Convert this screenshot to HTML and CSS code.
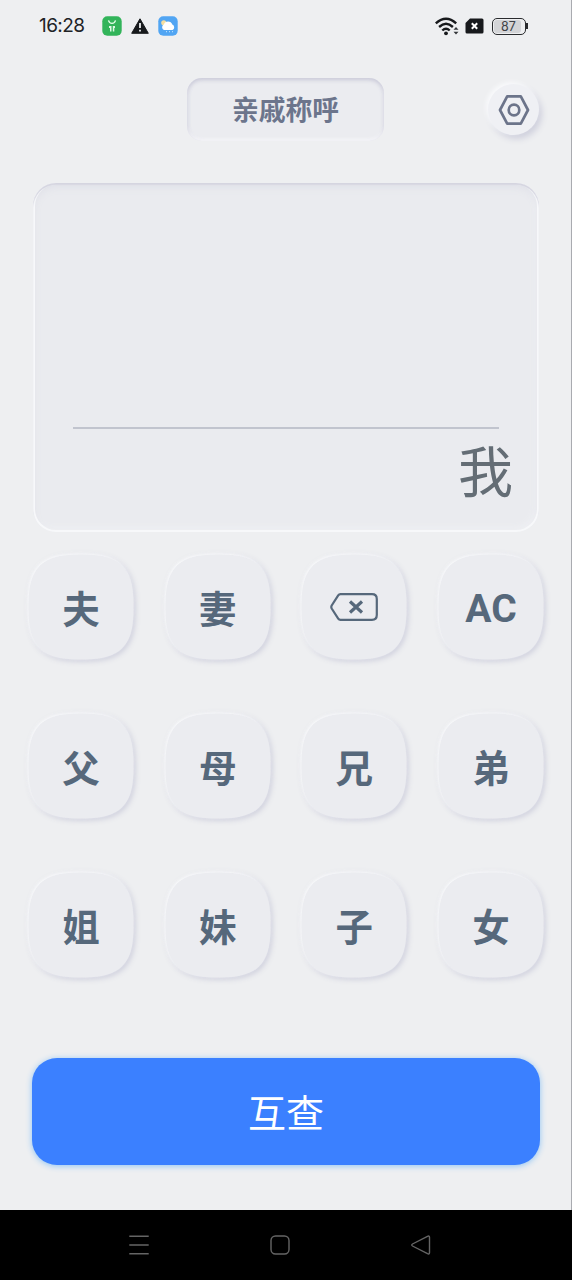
FILE: index.html
```html
<!DOCTYPE html>
<html lang="zh-CN">
<head>
<meta charset="utf-8">
<title>亲戚称呼</title>
<link rel="stylesheet" href="styles.css">
</head>
<body>
<div class="screen">
  <header class="status">
    <span class="time">16:28</span>
    <svg class="app-icon" width="20" height="20" viewBox="0 0 20 20">
      <rect x=".3" y=".3" width="19.4" height="19.4" rx="5" fill="#32b45a"/>
      <path d="M6.500 4.300c1 4 6 4 7 0" fill="none" stroke="#e4ffe9" stroke-width="1.3"/>
      <path d="M7 10h2.500v5.500H8v-3.500H7zM10.800 10h2.200v2h-.7v3.500h-1.500z" fill="#dcf8e3"/>
    </svg>
    <svg class="warning" width="18" height="16" viewBox="0 0 18 16">
      <path d="M9 .8 17.300 15.300H.7z" fill="#17191c" stroke="#17191c" stroke-width="1" stroke-linejoin="round"/>
      <path d="M9 5v5M9 11.700v1.800" stroke="#eef0f2" stroke-width="1.800"/>
    </svg>
    <svg class="weather" width="20" height="20" viewBox="0 0 20 20">
      <rect x=".3" y=".3" width="19.400" height="19.400" rx="5" fill="#51a5f3"/>
      <circle cx="5.800" cy="6.800" r="2.600" fill="#f6dfa0"/>
      <path d="M6 14a3 3 0 0 1-.2-5.500 4.500 4.500 0 0 1 8.500 0A3 3 0 0 1 14.500 14z" fill="#fff"/>
      <path d="M8 15.700h1M11 15.700h1M14 15.700h1" stroke="#c9e8ff"/>
    </svg>
    <div class="signals">
      <svg width="24" height="19" viewBox="0 0 24 19">
        <g fill="none" stroke="#17191c" stroke-width="2.400">
          <path d="M.8 6.300Q11 -2.900 21.200 6.300"/>
          <path d="M4.100 10Q11 3.700 17.900 10"/>
          <path d="M7.300 13.500Q11 10 14.700 13.500"/>
        </g>
        <circle cx="11" cy="16.300" r="1.900" fill="#17191c"/>
        <path d="M18.500 12.700 21 10l2.500 2.700zM18.500 14.700 21 17.400l2.500-2.700z" fill="#33363a"/>
      </svg>
      <svg class="sim" width="19" height="16" viewBox="0 0 19 16">
        <path d="M5 .5h12q1.500 0 1.500 1.500v12q0 1.500-1.500 1.500H2Q.5 15.500.5 14V5z" fill="#17191c"/>
        <path d="m6.800 5.300 5.400 5.400m0-5.400-5.400 5.400" stroke="#fff" stroke-width="2"/>
      </svg>
      <span class="battery"><span class="level">87</span></span>
    </div>
  </header>

  <div class="top">
    <h1 class="title">亲戚称呼</h1>
    <button class="settings" aria-label="设置">
      <svg width="32" height="32" viewBox="0 0 32 32" fill="none" stroke="#6c748a" stroke-width="2.700" stroke-linejoin="round">
        <path d="M9.200 2.400h13.600L30 16l-7.200 13.600H9.200L2 16z"/>
        <circle cx="16" cy="16" r="5.300"/>
      </svg>
    </button>
  </div>

  <main>
    <section class="display">
      <div class="result"></div>
      <div class="entry">我</div>
    </section>
    <section class="keys">
      <button class="key"><svg class="tile" viewBox="0 0 106 106"><use href="#tile"/></svg><span>夫</span></button>
      <button class="key"><svg class="tile" viewBox="0 0 106 106"><use href="#tile"/></svg><span>妻</span></button>
      <button class="key" aria-label="删除"><svg class="tile" viewBox="0 0 106 106"><use href="#tile"/></svg>
        <svg class="erase" width="48" height="28" viewBox="0 0 48 28" fill="none" stroke="#56687b">
          <path d="M10.500 1.200H42q4.800 0 4.800 4.800v16q0 4.800-4.800 4.800H10.500q-1.500 0-2.300-1.200L1.700 15.500q-.8-1.500 0-3L8.200 2.400q.8-1.200 2.300-1.200z" stroke-width="2.200"/>
          <path d="m20 8.500 12 11m0-11-12 11" stroke-width="3.200"/>
        </svg>
      </button>
      <button class="key"><svg class="tile" viewBox="0 0 106 106"><use href="#tile"/></svg><span class="latin">AC</span></button>
      <button class="key"><svg class="tile" viewBox="0 0 106 106"><use href="#tile"/></svg><span>父</span></button>
      <button class="key"><svg class="tile" viewBox="0 0 106 106"><use href="#tile"/></svg><span>母</span></button>
      <button class="key"><svg class="tile" viewBox="0 0 106 106"><use href="#tile"/></svg><span>兄</span></button>
      <button class="key"><svg class="tile" viewBox="0 0 106 106"><use href="#tile"/></svg><span>弟</span></button>
      <button class="key"><svg class="tile" viewBox="0 0 106 106"><use href="#tile"/></svg><span>姐</span></button>
      <button class="key"><svg class="tile" viewBox="0 0 106 106"><use href="#tile"/></svg><span>妹</span></button>
      <button class="key"><svg class="tile" viewBox="0 0 106 106"><use href="#tile"/></svg><span>子</span></button>
      <button class="key"><svg class="tile" viewBox="0 0 106 106"><use href="#tile"/></svg><span>女</span></button>
    </section>
    <button class="lookup">互查</button>
  </main>

  <nav class="nav">
    <svg width="20" height="20" viewBox="0 0 20 20"><path d="M.3 1.200h19.400M.3 10h19.400M.3 18.800h19.400"/></svg>
    <svg width="20" height="20" viewBox="0 0 20 20"><rect x="1" y="1" width="18" height="18" rx="4.500"/></svg>
    <svg width="20" height="20" viewBox="0 0 20 20"><path d="M16.500 1.300 1.500 9q-1.500 1 0 2l15 7.700q2 .8 2-1V2.300q0-1.800-2-1z"/></svg>
  </nav>
</div>
<svg class="defs" width="0" height="0">
  <defs><path id="tile" d="M50 .5H56C92 .5 105.500 14 105.500 50V56C105.500 92 92 105.500 56 105.500H50C14 105.500 .5 92 .5 56V50C.5 14 14 .5 50 .5Z"/></defs>
</svg>
</body>
</html>
```

FILE: styles.css
```css
* { box-sizing: border-box; }
body {
  margin: 0;
  font-family: Roboto, "Noto Sans CJK SC", sans-serif;
  background: #eeeff1;
}
button { margin: 0; padding: 0; border: 0; background: none; font: inherit; }
svg { display: block; flex: none; }
.defs { position: absolute; }
.screen {
  width: 572px;
  height: 1280px;
  display: flex;
  flex-direction: column;
  overflow: hidden;
}
.status {
  height: 52px;
  padding: 0 45px 0 38px;
  display: flex;
  align-items: center;
  border-right: 1px solid #a9abb0;
  color: #202225;
}
.time { width: 64px; font: 19px/24px Inter, sans-serif; letter-spacing: -.6px; padding-left: 1px; }
.warning { margin-left: 9px; }
.weather { margin-left: 9px; }
.signals { margin-left: auto; display: flex; align-items: center; gap: 8px; }
.signals svg:first-child { margin-right: -2px; }
.battery {
  width: 34px;
  height: 17px;
  padding: 1px;
  border: 1.5px solid #292b2e;
  border-radius: 5px;
  position: relative;
}
.battery::after {
  content: "";
  position: absolute;
  right: -3px;
  top: 4px;
  width: 2px;
  height: 6px;
  background: #292b2e;
}
.level {
  display: block;
  width: 27px;
  height: 13px;
  border-radius: 3px;
  background: #d3d4d7;
  color: #404246;
  font: 12.500px/13px Inter, sans-serif;
  text-align: center;
  padding-left: 2px;
}
.top {
  height: 131px;
  padding: 26px 31px 0;
  display: grid;
  grid-template-columns: 1fr 197px 1fr;
  align-items: start;
  border-right: 1px solid #a9abb0;
}
.title {
  grid-column: 2;
  height: 63px;
  margin: 0;
  border-radius: 15px;
  background: #ebecf0;
  box-shadow: inset 0 2px 4px #c9c9d8, inset 0 -2px 3px #fafafc, inset 1px 0 4px #e0e1e9;
  color: #6c758c;
  font-size: 26.800px;
  font-weight: 700;
  line-height: 67px;
  text-align: center;
}
.settings {
  justify-self: end;
  width: 51px;
  height: 51px;
  margin: 6px 1px 0 0;
  display: grid;
  place-items: center;
  border-radius: 50%;
  background: #eff0f4;
  box-shadow: -2px -2px 4px #f9fafc, 3px 4px 6px #cfd0dd;
}
main {
  height: 1027px;
  padding: 0 31px 0 33px;
  border-right: 1px solid #a9abb0;
}
.display {
  height: 349px;
  margin-right: 1px;
  padding: 2px 28px 0 40px;
  border-radius: 23px;
  background: #eaebef;
  box-shadow: inset 0 2px 1px #d5d5e0, inset 0 0 0 2px #f7f8fa, inset 0 4px 8px #dfe0e8, inset -3px -3px 7px #f1f2f5;
}
.result { height: 244px; margin-right: 12px; border-bottom: 2px solid #c1c4ce; }
.entry { margin-right: -2px; color: #646d75; font-size: 55px; line-height: 88px; text-align: right; }
.keys {
  width: 516px;
  margin: 22px 0 0 -5px;
  display: grid;
  grid-template-columns: repeat(4, 106px);
  justify-content: space-between;
  row-gap: 53px;
}
.key {
  height: 106px;
  display: grid;
  place-items: center;
  color: #56687b;
  font-size: 37.500px;
  font-weight: 700;
}
.key > * { grid-area: 1 / 1; }
.tile {
  width: 106px;
  height: 106px;
  overflow: visible;
  fill: #ebecf0;
  filter: drop-shadow(-1px -1px 1.500px #fafbfc) drop-shadow(2.500px 2.500px 2.500px #cfd0dd);
}
.erase { position: relative; }
.key span { position: relative; line-height: 56px; padding-top: 5px; }
.key .latin { padding-top: 3px; font-size: 39px; }
.lookup {
  display: block;
  width: 508px;
  height: 107px;
  margin: 80px 0 0 -1px;
  border-radius: 25px;
  background: #3b80ff;
  box-shadow: 0 1px 6px #8fc4f5;
  color: #fff;
  font-size: 38px;
  font-weight: 400;
  line-height: 113px;
  text-align: center;
}
.nav {
  height: 70px;
  padding: 0 141px 0 129px;
  display: flex;
  align-items: center;
  justify-content: space-between;
  background: #000;
  fill: none;
  stroke: #656565;
  stroke-width: 1.4;
}
```
